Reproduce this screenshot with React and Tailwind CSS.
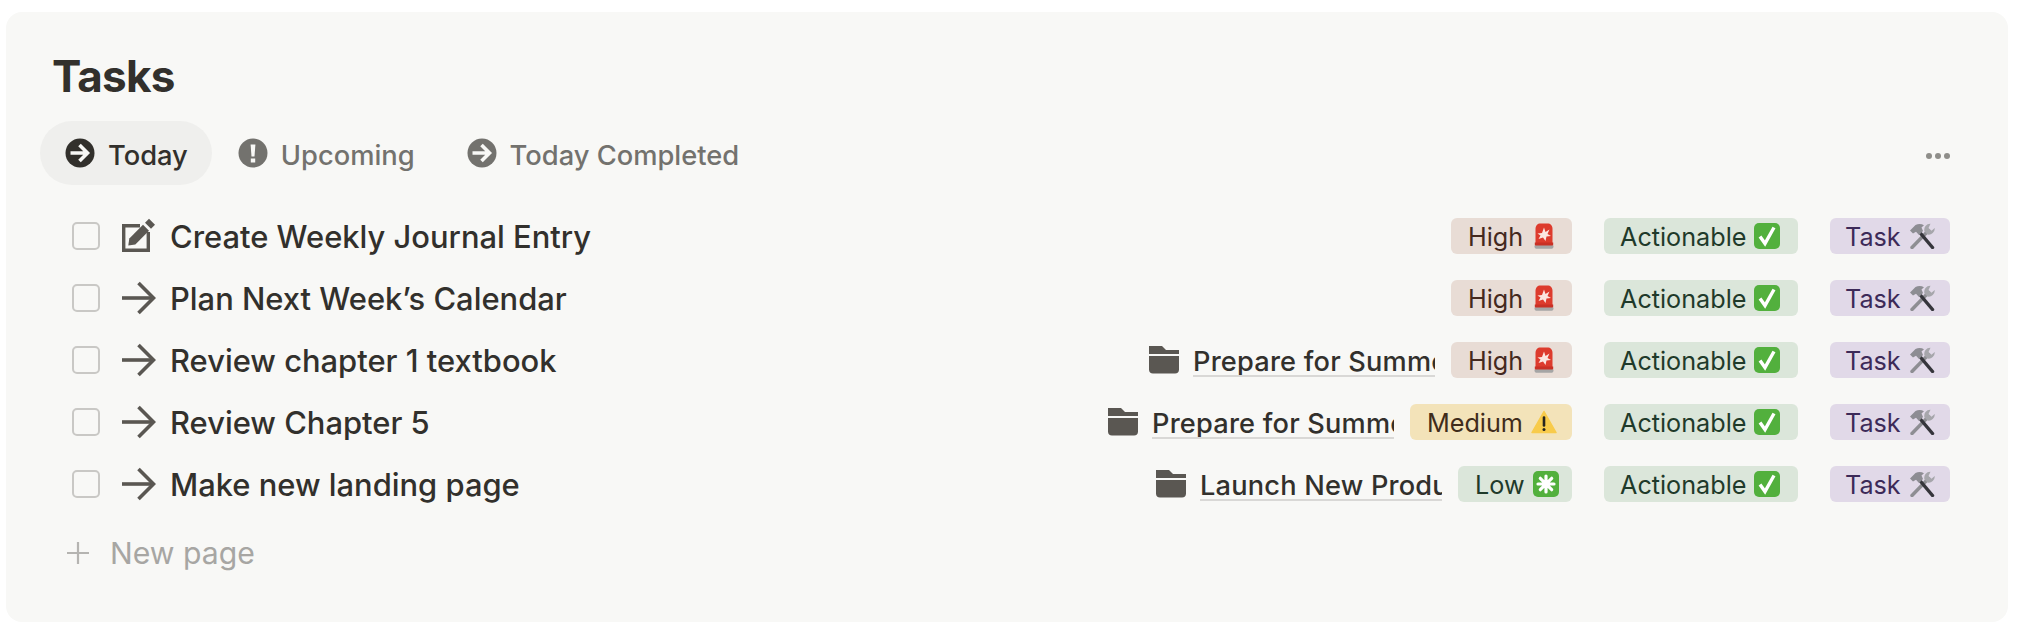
const DARK = "#5a5752";

function ArrowIcon() {
  return (
    <svg width="34" height="34" viewBox="0 0 34 34" className="shrink-0" fill="none" stroke={DARK} strokeWidth="3.6">
      <path d="M0 17H31" />
      <path d="M16.5 2L31.5 17L16.5 32" />
    </svg>
  );
}

function EditIcon() {
  return (
    <svg width="34" height="36" viewBox="0 0 34 36" className="shrink-0" fill="none">
      <path d="M18 7.7H1.7V32.3H26.3V14" stroke={DARK} strokeWidth="3.4" />
      <path d="M6.3 27.5L7.3 20.5L21 6.8L27 12.8L13.3 26.5Z" fill={DARK} />
      <path d="M23 4.8L27 0.8L33 6.8L29 10.8Z" fill={DARK} />
    </svg>
  );
}

function CircleArrow({ color }) {
  return (
    <svg width="30" height="30" viewBox="0 0 30 30" className="shrink-0">
      <circle cx="15" cy="15" r="14.5" fill={color} />
      <path d="M5.5 15H22M14.5 7L22.5 15L14.5 23" fill="none" stroke="#f8f8f6" strokeWidth="3.6" />
    </svg>
  );
}

function CircleBang({ color }) {
  return (
    <svg width="30" height="30" viewBox="0 0 30 30" className="shrink-0">
      <circle cx="15" cy="15" r="14.5" fill={color} />
      <path d="M12.6 6.5H17.4L16.5 18.5H13.5Z" fill="#f8f8f6" />
      <rect x="12.8" y="20.5" width="4.4" height="4" fill="#f8f8f6" />
    </svg>
  );
}

function Folder() {
  return (
    <svg width="30" height="28" viewBox="0 0 30 28" className="shrink-0">
      <path d="M0 0H13L17 4H30V8H0Z" fill={DARK} />
      <path d="M0 10H30V23.5C30 26 28.5 27.5 26 27.5H4C1.5 27.5 0 26 0 23.5Z" fill={DARK} />
    </svg>
  );
}

function Siren() {
  return (
    <svg width="26" height="26" viewBox="0 0 26 26" className="shrink-0">
      <path d="M4.5 20V6C4.5 2.5 6.5 0.5 9.5 0.5H16.5C19.5 0.5 21.5 2.5 21.5 6V20Z" fill="#dd3b2d" />
      <path d="M13 4.5L14.5 9L18.5 6.5L16.5 11L20 13L15.5 13.5L14.5 18L12 14.5L7.5 16L9.5 12.5L6.5 10.5L11 10Z" fill="#fbe6e0" />
      <path d="M3.8 19.5H22.2V21.5C22.2 22.5 21.5 23 20.5 23H5.5C4.5 23 3.8 22.5 3.8 21.5Z" fill="#c93025" />
      <path d="M3.5 22.5H22.5V23.5C22.5 25 21.5 25.8 20 25.8H6C4.5 25.8 3.5 25 3.5 23.5Z" fill="#a5a5a5" />
    </svg>
  );
}

function CheckEmoji() {
  return (
    <svg width="26" height="26" viewBox="0 0 26 26" className="shrink-0">
      <rect x="0" y="0" width="26" height="26" rx="5" fill="#52b03d" />
      <path d="M6 13.5L11 20.5L20 4.5" fill="none" stroke="#ffffff" strokeWidth="3.4" />
    </svg>
  );
}

function Tools() {
  return (
    <svg width="26" height="26" viewBox="0 0 26 26" className="shrink-0">
      <path d="M3 24.5L19.5 7.5" stroke="#8e8e93" strokeWidth="3.4" strokeLinecap="round" />
      <path d="M21.5 0.8A6 6 0 0 0 15.5 8.5L18.5 11.5A6 6 0 0 0 25.7 5L22.5 7.8L19.5 5Z" fill="#a6a6ab" />
      <path d="M23.5 24.5L10 8.5" stroke="#35353b" strokeWidth="3.4" strokeLinecap="round" />
      <path d="M1 7.5L6.5 2C9.5 0.5 12.5 0.8 15 2.2L12.5 4.5L14 8L10 12L7 8.8L4 10.5Z" fill="#8d8d93" />
    </svg>
  );
}

function Warning() {
  return (
    <svg width="26" height="24" viewBox="0 0 26 24" className="shrink-0">
      <path d="M13 1.5L25 22.5H1Z" fill="#f8cb4b" stroke="#f8cb4b" strokeWidth="1.5" strokeLinejoin="round" />
      <path d="M13 7.5V15.5" stroke="#26241f" strokeWidth="2.6" strokeLinecap="round" />
      <circle cx="13" cy="19.4" r="1.5" fill="#26241f" />
    </svg>
  );
}

function Spark() {
  return (
    <svg width="26" height="26" viewBox="0 0 26 26" className="shrink-0">
      <rect width="26" height="26" rx="5" fill="#52b03d" />
      <path d="M13 5V21M5 13H21M7.3 7.3L18.7 18.7M18.7 7.3L7.3 18.7" stroke="#ffffff" strokeWidth="3.2" strokeLinecap="round" />
    </svg>
  );
}

function Badge({ className, children, icon }) {
  return (
    <span className={`flex h-[36px] shrink-0 items-center gap-[8px] rounded-[6px] text-[25.2px] leading-none ${className}`}>
      <span className="pt-[3px]">{children}</span>
      {icon}
    </span>
  );
}

const PRIORITY = {
  High: { cls: "w-[121px] pl-[17px] bg-[#e8dcd5] text-[#44291f]", icon: <Siren /> },
  Medium: { cls: "w-[162px] pl-[17px] bg-[#f3e3b9] text-[#402c1b]", icon: <Warning /> },
  Low: { cls: "w-[114px] pl-[17px] bg-[#dbe6da] text-[#1f3a2a]", icon: <Spark /> },
};

const ROWS = [
  { title: "Create Weekly Journal Entry", icon: <EditIcon />, pr: "High" },
  { title: "Plan Next Week’s Calendar", icon: <ArrowIcon />, pr: "High" },
  { title: "Review chapter 1 textbook", icon: <ArrowIcon />, pr: "High", project: "Prepare for Summer Exams" },
  { title: "Review Chapter 5", icon: <ArrowIcon />, pr: "Medium", project: "Prepare for Summer Exams" },
  { title: "Make new landing page", icon: <ArrowIcon />, pr: "Low", project: "Launch New Product" },
];

function Row({ title, icon, pr, project }) {
  const p = PRIORITY[pr];
  return (
    <div className="flex h-[62px] items-center justify-between">
      <div className="flex items-center">
        <span className="h-[28px] w-[28px] shrink-0 rounded-[5px] border-2 border-[#c9c8c5]" />
        <span className="ml-[22px] flex w-[48px] shrink-0">{icon}</span>
        <span className="pt-[2px] text-[30.9px] font-medium leading-none text-[#32302c]">{title}</span>
      </div>
      <div className="flex items-center gap-[32px]">
        <div className="flex items-center gap-[16px]">
          {project && (
            <div className="flex items-center gap-[14px]">
              <Folder />
              <span className="block w-[242px] overflow-hidden whitespace-nowrap border-b-2 border-[#d9d8d6] pt-[5px] text-[27.2px] font-medium leading-[27px] tracking-[0.2px] text-[#32302c]">
                {project}
              </span>
            </div>
          )}
          <Badge className={p.cls} icon={p.icon}>{pr}</Badge>
        </div>
        <Badge className="w-[194px] pl-[16px] bg-[#dbe6da] text-[#1f3a2a]" icon={<CheckEmoji />}>Actionable</Badge>
        <Badge className="w-[120px] pl-[15px] bg-[#e1d9e8] text-[#3c2a58]" icon={<Tools />}>Task</Badge>
      </div>
    </div>
  );
}

export default function App() {
  return (
    <div className="min-h-screen bg-white pl-[6px] pt-[12px] font-['Inter',sans-serif]">
      <div className="h-[610px] w-[2002px] rounded-[16px] bg-[#f8f8f6] pl-[34px] pr-[58px]">
        <h1 className="pl-[12px] pt-[36px] text-[44px] font-bold leading-[56px] tracking-[-0.8px] text-[#32302c]">Tasks</h1>
        <div className="mt-[17px] flex h-[64px] items-center justify-between">
          <div className="flex items-center text-[27.3px] font-medium leading-none">
            <div className="flex h-[64px] items-center gap-[13px] rounded-[32px] bg-[#efefed] pl-[25px] pr-[24px] text-[#32302c]">
              <CircleArrow color="#32302c" />
              <span className="pt-[5px]">Today</span>
            </div>
            <div className="ml-[26px] flex items-center gap-[13px] text-[#73726e]">
              <CircleBang color="#73726e" />
              <span className="pt-[5px]">Upcoming</span>
            </div>
            <div className="ml-[52px] flex items-center gap-[13px] text-[#73726e]">
              <CircleArrow color="#73726e" />
              <span className="pt-[5px]">Today Completed</span>
            </div>
          </div>
          <div className="mt-[6px] flex items-center gap-[3px]">
            <span className="h-[6px] w-[6px] rounded-full bg-[#8f8e8a]" />
            <span className="h-[6px] w-[6px] rounded-full bg-[#8f8e8a]" />
            <span className="h-[6px] w-[6px] rounded-full bg-[#8f8e8a]" />
          </div>
        </div>
        <div className="mt-[20px] pl-[32px]">
          {ROWS.map((r) => (
            <Row key={r.title} {...r} />
          ))}
        </div>
        <div className="mt-[16px] flex h-[44px] items-center pl-[27px] text-[30.2px] leading-none text-[#a7a6a3]">
          <svg width="22" height="22" viewBox="0 0 22 22" className="shrink-0" stroke="#b5b4b1" strokeWidth="2.2">
            <path d="M11 0V22M0 11H22" />
          </svg>
          <span className="ml-[21px]">New page</span>
        </div>
      </div>
    </div>
  );
}
